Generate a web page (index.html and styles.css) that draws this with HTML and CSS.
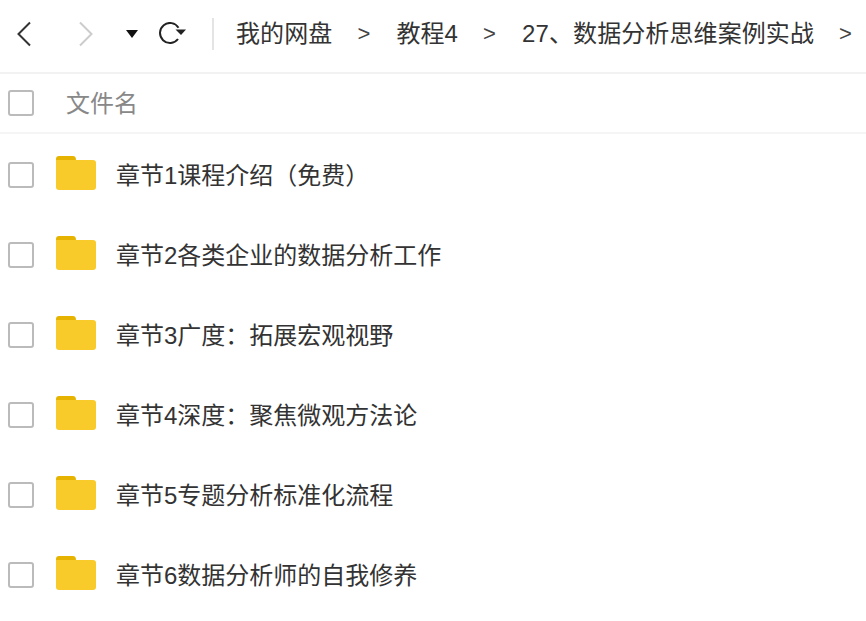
FILE: index.html
```html
<!DOCTYPE html>
<html lang="zh-CN">

<head>
    <meta charset="UTF-8">
    <title>我的网盘</title>
    <link rel="stylesheet" href="styles.css">
</head>

<body>
    <!-- Toolbar -->
    <div class="toolbar">
        <svg class="back-icon" width="18" height="26" viewBox="0 0 18 26"><path d="M14 1.5 L2.5 13 L14 24.5" fill="none" stroke="#333" stroke-width="2"/></svg>
        <svg class="next-icon" width="18" height="26" viewBox="0 0 18 26"><path d="M3 1.5 L14.5 13 L3 24.5" fill="none" stroke="#ccc" stroke-width="2"/></svg>
        <svg class="drop-icon" width="12" height="8" viewBox="0 0 12 8"><path d="M0 0 H12 L6 8 Z" fill="#111"/></svg>
        <svg class="refresh-icon" width="28" height="24" viewBox="0 0 28 24"><path d="M20.5 5.7 A10 10 0 1 0 20 17" fill="none" stroke="#222" stroke-width="2"/><path d="M17.5 7.5 H28 L23 13 Z" fill="#222"/></svg>
        <div class="divider"></div>
        <div class="crumbs">
            <span class="crumb crumb-home">我的网盘</span>
            <span class="sep">&gt;</span>
            <span class="crumb">教程4</span>
            <span class="sep">&gt;</span>
            <span class="crumb">27、数据分析思维案例实战</span>
            <span class="sep">&gt;</span>
        </div>
    </div>

    <!-- Header -->
    <div class="list-head">
        <span class="check"></span>
        <span class="head-name">文件名</span>
    </div>

    <!-- Files -->
    <div class="file-row">
        <span class="check"></span>
        <svg class="folder" width="40" height="34" viewBox="0 0 40 34"><path d="M0 3 Q0 0 3 0 H17 Q20 0 20 4 H0 Z" fill="#e6b400"/><path d="M0 4 H37 Q40 4 40 7 V31 Q40 34 37 34 H3 Q0 34 0 31 Z" fill="#f8cb2a"/></svg>
        <span class="file-name">章节1课程介绍（免费）</span>
    </div>
    <div class="file-row">
        <span class="check"></span>
        <svg class="folder" width="40" height="34" viewBox="0 0 40 34"><path d="M0 3 Q0 0 3 0 H17 Q20 0 20 4 H0 Z" fill="#e6b400"/><path d="M0 4 H37 Q40 4 40 7 V31 Q40 34 37 34 H3 Q0 34 0 31 Z" fill="#f8cb2a"/></svg>
        <span class="file-name">章节2各类企业的数据分析工作</span>
    </div>
    <div class="file-row">
        <span class="check"></span>
        <svg class="folder" width="40" height="34" viewBox="0 0 40 34"><path d="M0 3 Q0 0 3 0 H17 Q20 0 20 4 H0 Z" fill="#e6b400"/><path d="M0 4 H37 Q40 4 40 7 V31 Q40 34 37 34 H3 Q0 34 0 31 Z" fill="#f8cb2a"/></svg>
        <span class="file-name">章节3广度：拓展宏观视野</span>
    </div>
    <div class="file-row">
        <span class="check"></span>
        <svg class="folder" width="40" height="34" viewBox="0 0 40 34"><path d="M0 3 Q0 0 3 0 H17 Q20 0 20 4 H0 Z" fill="#e6b400"/><path d="M0 4 H37 Q40 4 40 7 V31 Q40 34 37 34 H3 Q0 34 0 31 Z" fill="#f8cb2a"/></svg>
        <span class="file-name">章节4深度：聚焦微观方法论</span>
    </div>
    <div class="file-row">
        <span class="check"></span>
        <svg class="folder" width="40" height="34" viewBox="0 0 40 34"><path d="M0 3 Q0 0 3 0 H17 Q20 0 20 4 H0 Z" fill="#e6b400"/><path d="M0 4 H37 Q40 4 40 7 V31 Q40 34 37 34 H3 Q0 34 0 31 Z" fill="#f8cb2a"/></svg>
        <span class="file-name">章节5专题分析标准化流程</span>
    </div>
    <div class="file-row">
        <span class="check"></span>
        <svg class="folder" width="40" height="34" viewBox="0 0 40 34"><path d="M0 3 Q0 0 3 0 H17 Q20 0 20 4 H0 Z" fill="#e6b400"/><path d="M0 4 H37 Q40 4 40 7 V31 Q40 34 37 34 H3 Q0 34 0 31 Z" fill="#f8cb2a"/></svg>
        <span class="file-name">章节6数据分析师的自我修养</span>
    </div>
</body>

</html>
```

FILE: styles.css
```css
body {
    margin: 0;
    background-color: #fff;
    color: #333;
    font-family: "Liberation Sans", "Noto Sans CJK SC", sans-serif;
    font-size: 24px;
    overflow: hidden;
}

.toolbar {
    box-sizing: border-box;
    display: flex;
    align-items: center;
    height: 74px;
    padding: 0 0 4px 16px;
    border-bottom: 2px solid #f2f2f2;
    white-space: nowrap;
    overflow: hidden;
}

.toolbar > * {
    flex: none;
}

.next-icon {
    margin-left: 43px;
}

.drop-icon {
    margin-left: 31px;
}

.refresh-icon {
    margin-left: 20px;
}

.divider {
    width: 2px;
    height: 32px;
    margin-left: 26px;
    background-color: #e4e4e4;
}

.crumbs {
    display: flex;
    align-items: center;
    margin: 0 0 6px 22px;
    letter-spacing: 0.1px;
}

.sep {
    width: 14px;
    margin: 6px 25px 0;
    color: #444;
    font-size: 22px;
}

.list-head {
    display: flex;
    align-items: center;
    height: 58px;
    padding-left: 8px;
    border-bottom: 2px solid #f5f5f5;
}

.head-name {
    margin: 0 0 4px 32px;
    color: #888;
}

.check {
    box-sizing: border-box;
    flex: none;
    width: 26px;
    height: 26px;
    border: 2px solid #bbb;
    border-radius: 3px;
}

.file-row {
    display: flex;
    align-items: center;
    height: 80px;
    padding-left: 8px;
}

.file-row .check {
    margin-top: 2px;
}

.folder {
    flex: none;
    margin: 0 0 2px 22px;
}

.file-name {
    margin: 0 0 2px 20px;
}
```
